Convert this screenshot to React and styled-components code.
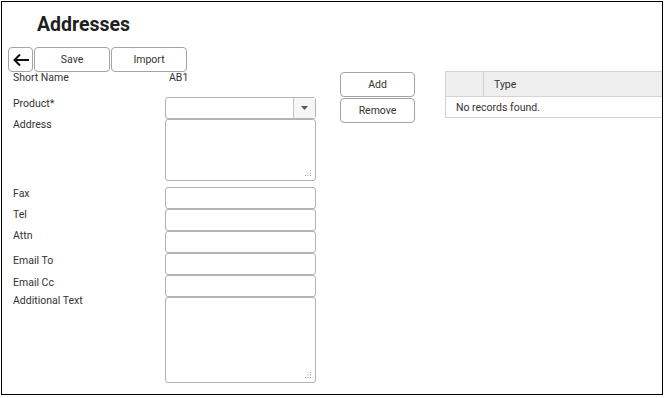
import React from "react";
import styled, { createGlobalStyle } from "styled-components";

const Global = createGlobalStyle`
  html, body { margin: 0; padding: 0; background: #fff; }
  body { font-family: Roboto, "Liberation Sans", Arial, sans-serif; color: #333; }
  * { box-sizing: border-box; }
`;

const Frame = styled.div`
  margin: 1px 0 0 1px;
  width: 662px;
  height: 394px;
  border: 1px solid #000;
  overflow: hidden;
  padding: 11px 0 0 6px;
  display: flex;
  flex-direction: column;
`;

const Title = styled.h1`
  margin: 0 0 0 29px;
  font-size: 19.5px;
  line-height: 24px;
  font-weight: 700;
  color: #1f1f1f;
`;

const Toolbar = styled.div`
  margin-top: 10px;
  display: flex;
  gap: 1px;
  height: 25px;
`;

const Button = styled.button`
  width: ${(p) => p.$w}px;
  height: 25px;
  padding: 0;
  border: 1px solid #a3a3a3;
  border-radius: 4px;
  background: #fff;
  font-family: Roboto, "Liberation Sans", Arial, sans-serif;
  font-size: 10.5px;
  color: #333;
  display: flex;
  align-items: center;
  justify-content: center;
`;

const Main = styled.div`
  display: flex;
  align-items: flex-start;
`;

const Form = styled.div`
  margin-left: 5px;
  width: 303px;
  display: flex;
  flex-direction: column;
`;

const Row = styled.div`
  display: flex;
  height: ${(p) => p.$h}px;
  margin-top: ${(p) => p.$mt || 0}px;
`;

const Label = styled.div`
  width: 152px;
  flex: none;
  font-size: 10.5px;
  line-height: 12px;
  color: #333;
  margin-top: ${(p) => p.$off || 0}px;
`;

const Value = styled.div`
  padding-left: 4px;
  font-size: 10.5px;
  line-height: 12px;
  color: #333;
`;

const Field = styled.div`
  position: relative;
  width: 151px;
  height: 100%;
  border: 1px solid #b3b3b3;
  border-radius: 3px;
  background: #fff;
  display: flex;
`;

const SelectArrow = styled.div`
  margin-left: auto;
  width: 22px;
  height: 100%;
  border-left: 1px solid #c6c6c6;
  background: #f6f6f6;
  display: flex;
  align-items: center;
  justify-content: center;
`;

const Grip = styled.svg`
  position: absolute;
  right: 3px;
  bottom: 3px;
`;

const Actions = styled.div`
  margin-left: 24px;
  width: 75px;
  display: flex;
  flex-direction: column;
  gap: 1px;
`;

const Table = styled.div`
  margin: -1px 0 0 30px;
  width: 240px;
  flex: none;
  border: 1px solid #d2d2d2;
  font-size: 10.5px;
  color: #333;
`;

const HeadRow = styled.div`
  display: flex;
  height: 25px;
  background: #efefef;
  border-bottom: 1px solid #d2d2d2;
`;

const HeadCell = styled.div`
  width: ${(p) => (p.$w ? `${p.$w}px` : "auto")};
  flex: ${(p) => (p.$w ? "none" : 1)};
  border-right: ${(p) => (p.$w ? "1px solid #d2d2d2" : "none")};
  padding-left: 10px;
  display: flex;
  align-items: center;
`;

const BodyRow = styled.div`
  height: 20px;
  padding-left: 10px;
  display: flex;
  align-items: center;
`;

const GripIcon = () => (
  <Grip width="7" height="7" viewBox="0 0 7 7">
    <g fill="#9a9a9a">
      <rect x="5" y="0" width="1" height="1" />
      <rect x="5" y="2.5" width="1" height="1" />
      <rect x="2.5" y="2.5" width="1" height="1" />
      <rect x="5" y="5" width="1" height="1" />
      <rect x="2.5" y="5" width="1" height="1" />
      <rect x="0" y="5" width="1" height="1" />
    </g>
  </Grip>
);

const BackIcon = () => (
  <svg width="18" height="14" viewBox="0 0 18 14">
    <path d="M17 7H2.5M8 1.5L2.5 7L8 12.5" fill="none" stroke="#111" strokeWidth="2" />
  </svg>
);

const inputs = [
  { label: "Fax", off: 1 },
  { label: "Tel", off: 0 },
  { label: "Attn", off: -1 },
  { label: "Email To", off: 2 },
  { label: "Email Cc", off: 2 },
];

export default function App() {
  return (
    <>
      <Global />
      <Frame>
        <Title>Addresses</Title>
        <Toolbar>
          <Button $w={25} aria-label="Back"><BackIcon /></Button>
          <Button $w={76}>Save</Button>
          <Button $w={76}>Import</Button>
        </Toolbar>
        <Main>
          <Form>
            <Row $h={25}>
              <Label>Short Name</Label>
              <Value>AB1</Value>
            </Row>
            <Row $h={22}>
              <Label $off={1}>Product*</Label>
              <Field>
                <SelectArrow>
                  <svg width="7" height="4" viewBox="0 0 7 4">
                    <path d="M0 0H7L3.5 4Z" fill="#555" />
                  </svg>
                </SelectArrow>
              </Field>
            </Row>
            <Row $h={62}>
              <Label>Address</Label>
              <Field><GripIcon /></Field>
            </Row>
            {inputs.map((r, i) => (
              <Row key={r.label} $h={22} $mt={i === 0 ? 6 : 0}>
                <Label $off={r.off}>{r.label}</Label>
                <Field />
              </Row>
            ))}
            <Row $h={86}>
              <Label $off={-2}>Additional Text</Label>
              <Field><GripIcon /></Field>
            </Row>
          </Form>
          <Actions>
            <Button $w={75}>Add</Button>
            <Button $w={75}>Remove</Button>
          </Actions>
          <Table>
            <HeadRow>
              <HeadCell $w={38} />
              <HeadCell>Type</HeadCell>
            </HeadRow>
            <BodyRow>No records found.</BodyRow>
          </Table>
        </Main>
      </Frame>
    </>
  );
}
